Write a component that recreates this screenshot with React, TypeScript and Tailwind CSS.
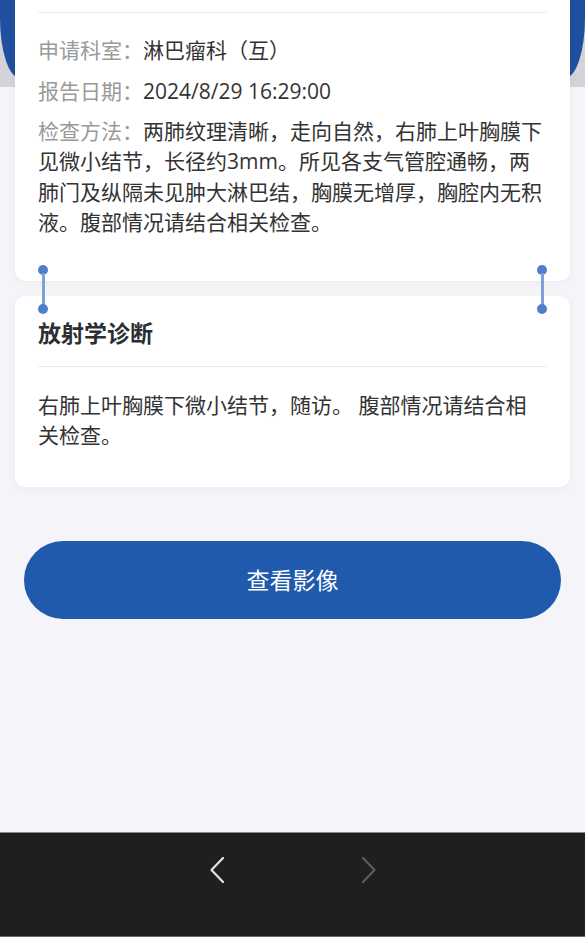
export default function App() {
  return (
    <div
      className="min-h-[937px] flex flex-col bg-[#f4f4f9] overflow-hidden"
      style={{ fontFamily: '"Open Sans", "Noto Sans CJK SC", sans-serif' }}
    >
      {/* Header band behind the card */}
      <div className="h-[87px] bg-[#d3d3d8]">
        <div className="h-[78px] bg-[#1f4f9e] rounded-bl-[20px_60px] rounded-br-[20px_60px]" />
      </div>

      <div className="relative -mt-[107px] px-[15px]">
        {/* Report details */}
        <div className="rounded-[10px] bg-white px-[23px] pt-[32px] pb-[44px] shadow-[0_2px_8px_rgba(0,0,0,0.04)]">
          <div className="h-px bg-[#ececec]" />
          <div className="mt-[22px] mr-[3px] text-[21px] leading-[30px] text-[#333]">
            <p>
              <span className="text-[#9a9a9a]">申请科室：</span>淋巴瘤科（互）
            </p>
            <p className="mt-[11px]">
              <span className="text-[#9a9a9a]">报告日期：</span>2024/8/29 16:29:00
            </p>
            <p className="mt-[10px] leading-[30.3px]">
              <span className="text-[#9a9a9a]">检查方法：</span>
              两肺纹理清晰，走向自然，右肺上叶胸膜下见微小结节，长径约3mm。所见各支气管腔通畅，两肺门及纵隔未见肿大淋巴结，胸膜无增厚，胸腔内无积液。腹部情况请结合相关检查。
            </p>
          </div>
        </div>

        {/* Diagnosis */}
        <div className="mt-[15px] rounded-[10px] bg-white px-[23px] pt-[21px] pb-[37px] shadow-[0_2px_8px_rgba(0,0,0,0.04)]">
          <h2 className="text-[23px] leading-[32px] font-semibold text-[#2b2f33]">放射学诊断</h2>
          <div className="mt-[17px] h-px bg-[#ececec]" />
          <p className="mt-[23px] mr-[3px] text-[21px] leading-[30px] text-[#333]">
            右肺上叶胸膜下微小结节，随访。 腹部情况请结合相关检查。
          </p>
        </div>

        {/* Connectors between the cards */}
        <div className="absolute left-[38px] top-[285px] flex flex-col items-center">
          <span className="h-[10px] w-[10px] rounded-full bg-[#4e7fcb]" />
          <span className="-my-[2px] h-[33px] w-[3px] bg-[#7ea1d9]" />
          <span className="h-[10px] w-[10px] rounded-full bg-[#4e7fcb]" />
        </div>
        <div className="absolute left-[537px] top-[285px] flex flex-col items-center">
          <span className="h-[10px] w-[10px] rounded-full bg-[#4e7fcb]" />
          <span className="-my-[2px] h-[33px] w-[3px] bg-[#7ea1d9]" />
          <span className="h-[10px] w-[10px] rounded-full bg-[#4e7fcb]" />
        </div>
      </div>

      <button className="mx-[24px] mt-[54px] h-[78px] rounded-full bg-[#1f5aad] text-[23px] text-white">
        查看影像
      </button>

      {/* Browser nav bar */}
      <div className="mt-auto h-[105px] border-t border-[#8a8a8a] border-b border-b-[#6a6a6a] bg-[#1f1f1f] flex justify-center gap-[138px] pt-[24px]">
        <svg width="14" height="26" viewBox="0 0 14 26" fill="none">
          <polyline points="13,1 1.5,13 13,25" stroke="#e4e4e4" strokeWidth="2.2" strokeLinecap="round" strokeLinejoin="round" />
        </svg>
        <svg width="14" height="26" viewBox="0 0 14 26" fill="none">
          <polyline points="1,1 12.5,13 1,25" stroke="#5c5c5c" strokeWidth="2.2" strokeLinecap="round" strokeLinejoin="round" />
        </svg>
      </div>
    </div>
  );
}
